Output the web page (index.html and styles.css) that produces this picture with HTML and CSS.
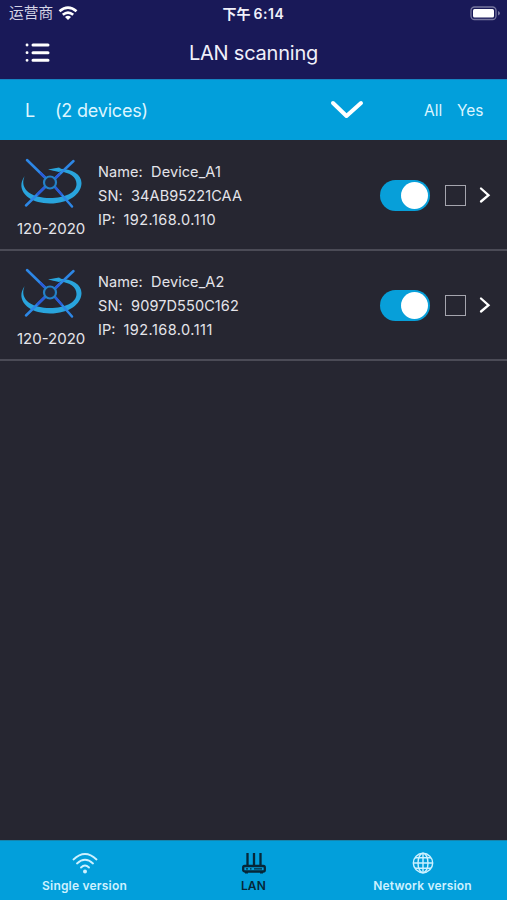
FILE: index.html
```html
<!DOCTYPE html>
<html lang="en">
<head>
<meta charset="utf-8">
<title>LAN scanning</title>
<link rel="stylesheet" href="styles.css">
</head>
<body>
<svg width="0" height="0" class="defs" aria-hidden="true">
  <defs>
    <symbol id="drone" viewBox="0 0 64 54">
      <path d="M4.800 19C-5 32 7 46.500 30 46.500C49 46.500 61.500 37 61.500 26C61.500 16 49 9.500 29 12.500L40 14.500C50 15.500 56.500 20 56.500 27C56.500 35.500 45 41 30 41C10 41 -1 31 4.800 19Z" fill="#29a4dc"/>
      <path d="M28 12.500L39 10.500L42 12.500L39 15Z" fill="#29a4dc"/>
      <g fill="none" stroke="#2d87e6" stroke-width="2.500" stroke-linecap="round"><path d="M7 3L25 20.500"/><path d="M53.500 4L35 21.500"/><path d="M25 30L6 48.500"/><path d="M35 30L52 49.500"/></g>
      <g fill="none" stroke="#2a5bd8" stroke-width="2.500"><path d="M20 15.600L25 20.500M40 16.700L35 21.500M25 30L17 37.800M35 30L42 38"/></g>
      <circle cx="30" cy="25.500" r="6" fill="#252a3c" stroke="#2381c6" stroke-width="2.200"/>
    </symbol>
  </defs>
</svg>
<div class="screen">
  <header class="top">
    <div class="status">
      <div class="carrier"><span>运营商</span>
        <svg class="wifi" viewBox="0 0 20 15"><path d="M1.500 5.300Q10-2.200 18.500 5.300M4.800 8.800Q10 4.300 15.200 8.800" fill="none" stroke="#fff" stroke-width="2.600"/><path d="M7 11Q10 8.700 13 11L10 14Z" fill="#fff"/></svg>
      </div>
      <div class="clock">下午<span class="time">6:14</span></div>
      <div class="power"><svg class="battery" viewBox="0 0 31 15"><rect x="1" y="1" width="25" height="12.500" rx="3.500" fill="none" stroke="#77779f" stroke-width="1.300"/><rect x="3" y="3" width="21" height="8.500" rx="1.500" fill="#fff"/><path d="M28 5V9.500Q30 8.500 30 7.200Q30 6 28 5Z" fill="#77779f"/></svg></div>
    </div>
    <div class="nav">
      <svg class="menu" viewBox="0 0 26 20"><g fill="none" stroke="#fff" stroke-linecap="round" stroke-width="3"><path d="M8 2H23M8 9.700H23M8 17.300H23"/><path d="M2 2h.1M2 9.700h.1M2 17.300h.1" stroke-width="2.800"/></g></svg>
      <h1>LAN scanning</h1>
    </div>
  </header>
  <div class="group">
    <span class="letter">L</span><span class="count">(2 devices)</span>
    <svg class="down" viewBox="0 0 34 20"><path d="M3 3L16.500 16L31 3" fill="none" stroke="#fff" stroke-width="4" stroke-linecap="round" stroke-linejoin="round"/></svg>
    <span class="all">All</span><span class="yes">Yes</span>
  </div>
  <main>
    <section class="device">
      <div class="model"><svg class="drone"><use href="#drone"/></svg><span>120-2020</span></div>
      <div class="info"><div class="l-name">Name:&nbsp; Device_A1</div><div class="l-sn">SN:&nbsp; 34AB95221CAA</div><div class="l-ip">IP:&nbsp; <span>192.168.0.110</span></div></div>
      <div class="switch"><i></i></div><div class="box"></div>
      <svg class="go" viewBox="0 0 12 18"><path d="M2 2.500L9.500 9.200L2 15.500" fill="none" stroke="#fff" stroke-width="2.300" stroke-linecap="round"/></svg>
    </section>
    <section class="device">
      <div class="model"><svg class="drone"><use href="#drone"/></svg><span>120-2020</span></div>
      <div class="info"><div class="l-name">Name:&nbsp; Device_A2</div><div class="l-sn">SN:&nbsp; 9097D550C162</div><div class="l-ip">IP:&nbsp; <span>192.168.0.111</span></div></div>
      <div class="switch"><i></i></div><div class="box"></div>
      <svg class="go" viewBox="0 0 12 18"><path d="M2 2.500L9.500 9.200L2 15.500" fill="none" stroke="#fff" stroke-width="2.300" stroke-linecap="round"/></svg>
    </section>
  </main>
  <footer class="tabs">
    <div class="tab"><svg viewBox="0 0 26 24"><g fill="none" stroke="#cdf1ff" stroke-width="1.800" stroke-linecap="round"><path d="M1.500 7.500Q13-3.500 24.500 7.500M5 11.500Q13 4 21 11.500M9 15.500Q13 11.500 17 15.500"/></g><circle cx="13" cy="19.500" r="2" fill="#cdf1ff"/></svg><span>Single version</span></div>
    <div class="tab active"><svg viewBox="0 0 26 24"><g fill="none" stroke="#062738" stroke-width="2.300"><path d="M6.500 1V14M13 1V14M19.500 1V14"/><rect x="2.200" y="14" width="21.600" height="5.500" rx="1.500"/><path d="M4 20.700H7M19 20.700H22" stroke-width="1.500"/><path d="M5 16.800H7M9 16.800H10.500M13 16.800H21" stroke-width="1.200"/></g></svg><span>LAN</span></div>
    <div class="tab"><svg viewBox="0 0 26 24"><g fill="none" stroke="#cdf1ff" stroke-width="1.400"><circle cx="13" cy="11" r="9.700"/><ellipse cx="13" cy="11" rx="5" ry="9.700"/><path d="M13 1.300V20.700M3.300 11H22.700M5 5.800H21M5 16.200H21"/></g></svg><span>Network version</span></div>
  </footer>
</div>
</body>
</html>
```
FILE: styles.css
```css
* { box-sizing: border-box; }
body { margin: 0; background: #262631; font-family: Inter, "Noto Sans CJK SC", sans-serif; }
svg { display: block; flex: none; }
.defs { position: absolute; }
.screen { width: 507px; height: 900px; display: flex; flex-direction: column; overflow: hidden; }
.top { height: 79px; background: #191958; color: #f0f0fa; }
.status { height: 27px; display: grid; grid-template-columns: 1fr auto 1fr; align-items: center; font-size: 14.7px; line-height: 27px; }
.carrier { display: flex; align-items: center; padding-left: 9px; gap: 5px; color: #d5d5e6; }
.wifi { width: 20px; height: 15px; }
.clock { font-weight: 600; font-size: 14px; display: flex; gap: 3px; }
.time { letter-spacing: .6px; }
.power { display: flex; justify-content: flex-end; padding-right: 6px; }
.battery { width: 31px; height: 15px; }
.nav { display: grid; grid-template-columns: 100px 1fr 100px; height: 52px; align-items: center; }
.menu { width: 26px; height: 20px; margin-left: 25px; }
h1 { margin: 0; font-size: 20px; letter-spacing: -.22px; font-weight: 400; text-align: center; line-height: 52px; }
.group { height: 61px; background: #029fdb; color: #dcf5ff; display: flex; align-items: center; padding-left: 25px; border-top: 1px solid #1684c2; }
.letter { width: 30px; font-size: 18px; }
.count { width: 275px; font-size: 18px; letter-spacing: -.2px; }
.down { width: 34px; height: 20px; }
.all { margin-left: 60px; width: 33px; font-size: 15.5px; }
.yes { font-size: 15.5px; }
main { flex: 1; }
.device { height: 110px; display: flex; align-items: center; color: #e4e4ea; background: linear-gradient(#4b4b56, #4b4b56) 0 109px / 100% 2px no-repeat; }
.device + .device { background: linear-gradient(#4b4b56, #4b4b56) 0 0 / 100% 1px no-repeat, linear-gradient(#4b4b56, #4b4b56) 0 109px / 100% 2px no-repeat; }
.device:last-child { height: 111px; padding-bottom: 1px; }
.model { width: 81px; margin-left: 17px; align-self: stretch; padding-top: 17px; font-size: 15px; white-space: nowrap; }
.drone { width: 64px; height: 54px; margin-left: 3px; }
.model > span { display: block; line-height: 20px; margin-top: 8px; }
.info { width: 282px; font-size: 14.5px; line-height: 24px; padding-top: 2px; }
.l-name { letter-spacing: .08px; }
.l-sn { letter-spacing: .1px; }
.l-ip span { letter-spacing: .45px; }
.switch { width: 50px; height: 31px; border-radius: 16px; background: #079fd9; padding: 2px; display: flex; justify-content: flex-end; }
.switch i { width: 27px; height: 27px; border-radius: 50%; background: #fff; }
.box { width: 21px; height: 21px; border: 1px solid #a5a5ae; margin-left: 15px; }
.go { width: 12px; height: 18px; margin-left: 13px; }
.tabs { height: 60px; background: #029fdb; display: grid; grid-template-columns: repeat(3, 1fr); border-top: 1px solid #1684ac; }
.tab { display: flex; flex-direction: column; align-items: center; padding-top: 11px; color: #cdf1ff; font-size: 12px; font-weight: 600; letter-spacing: .2px; }
.tab svg { width: 26px; height: 24px; }
.tab span { line-height: 16px; margin-top: 2px; }
.tab.active { color: #062738; }
```
